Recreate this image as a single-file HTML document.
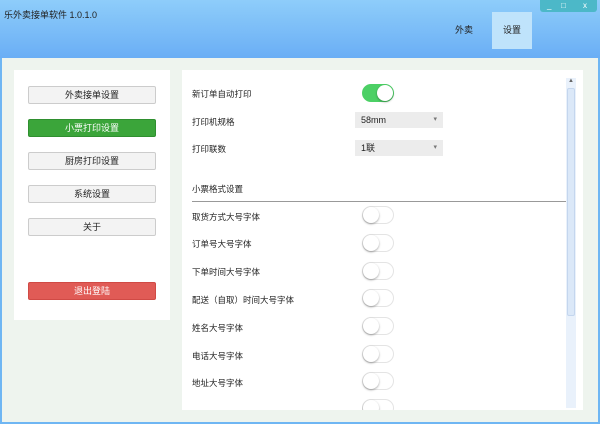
<!DOCTYPE html>
<html><head><meta charset="utf-8"><style>
*{margin:0;padding:0;box-sizing:border-box}
body{width:600px;height:424px;overflow:hidden;font-family:"Liberation Sans","Noto Sans CJK SC",sans-serif;font-size:9px;color:#222;position:relative;background:#6fb6f3}
.title{position:absolute;left:0;top:0;width:600px;height:58px;background:linear-gradient(#8ecdfa,#6aaef5)}
.t{position:absolute;left:4px;top:8px;font-size:9px}
.tab{position:absolute;top:12px;height:37px;line-height:37px;text-align:center;font-size:9px}
.wb{position:absolute;left:540px;top:0;width:57px;height:12px;background:#4cb8c8;border-radius:0 0 3px 3px;color:#fff;font-size:8px;line-height:11px}
.content{position:absolute;left:2px;top:58px;width:596px;height:364px;background:#eef4ee}
.lp{position:absolute;left:14px;top:70px;width:156px;height:250px;background:#fff}
.rp{position:absolute;left:182px;top:70px;width:401px;height:340px;background:#fff}
.btn{position:absolute;left:28px;width:128px;height:18px;border:1px solid #ccc;border-radius:2px;background:#f3f3f3;text-align:center;line-height:16px;font-size:9px}
.lbl{position:absolute;left:192px;font-size:8.5px}
.tg{position:absolute;left:362px;width:32px;height:18px;border-radius:9px;border:1px solid #e4e4e4;background:#fff}
.tg::after{content:"";position:absolute;left:0;top:0;width:16px;height:16px;border-radius:50%;background:#fff;box-shadow:0 1px 2px rgba(0,0,0,.35)}
.on{background:#4cd065;border-color:#4cd065}
.on::after{left:14px}
.sel{position:absolute;left:355px;width:88px;height:16px;background:#ececec;font-size:9px;line-height:16px;padding-left:6px}
.sel::after{content:"▾";position:absolute;right:6px;top:0;font-size:7px;color:#777}
</style></head><body>
<div class="title"><div class="t">乐外卖接单软件 1.0.1.0</div>
<div class="tab" style="left:444px;width:40px">外卖</div>
<div class="tab" style="left:492px;width:40px;background:#bfe3fb">设置</div>
<div class="wb"><span style="position:absolute;left:7px">_</span><span style="position:absolute;left:21px">□</span><span style="position:absolute;left:43px">x</span></div></div>
<div class="content"></div>
<div class="lp"></div>
<div class="btn" style="top:86px">外卖接单设置</div>
<div class="btn" style="top:119px;background:#3ba53a;border-color:#2f8f2f;color:#fff">小票打印设置</div>
<div class="btn" style="top:152px">厨房打印设置</div>
<div class="btn" style="top:185px">系统设置</div>
<div class="btn" style="top:218px">关于</div>
<div class="btn" style="top:282px;background:#e05b56;border-color:#d04a45;color:#fff">退出登陆</div>
<div class="rp"></div>
<div style="position:absolute;left:566px;top:78px;width:10px;height:330px;background:#e9f1fb"></div>
<div style="position:absolute;left:567px;top:88px;width:8px;height:228px;background:#dbe8f8;border:1px solid #c4d6ee;border-radius:2px"></div>
<div style="position:absolute;left:568px;top:78px;font-size:6px;color:#666">▲</div>
<div class="lbl" style="top:88px">新订单自动打印</div><div class="tg on" style="top:84px"></div>
<div class="lbl" style="top:116px">打印机规格</div><div class="sel" style="top:112px">58mm</div>
<div class="lbl" style="top:143px">打印联数</div><div class="sel" style="top:140px">1联</div>
<div class="lbl" style="top:183px">小票格式设置</div>
<div style="position:absolute;left:192px;top:201px;width:374px;height:1px;background:#999"></div>
<div class="lbl" style="top:211px">取货方式大号字体</div><div class="tg" style="top:206px"></div>
<div class="lbl" style="top:238px">订单号大号字体</div><div class="tg" style="top:234px"></div>
<div class="lbl" style="top:266px">下单时间大号字体</div><div class="tg" style="top:262px"></div>
<div class="lbl" style="top:294px">配送（自取）时间大号字体</div><div class="tg" style="top:289px"></div>
<div class="lbl" style="top:322px">姓名大号字体</div><div class="tg" style="top:317px"></div>
<div class="lbl" style="top:350px">电话大号字体</div><div class="tg" style="top:345px"></div>
<div class="lbl" style="top:377px">地址大号字体</div><div class="tg" style="top:372px"></div>
<div style="position:absolute;left:362px;top:399px;width:32px;height:11px;overflow:hidden"><div class="tg" style="left:0;top:0"></div></div>
</body></html>
